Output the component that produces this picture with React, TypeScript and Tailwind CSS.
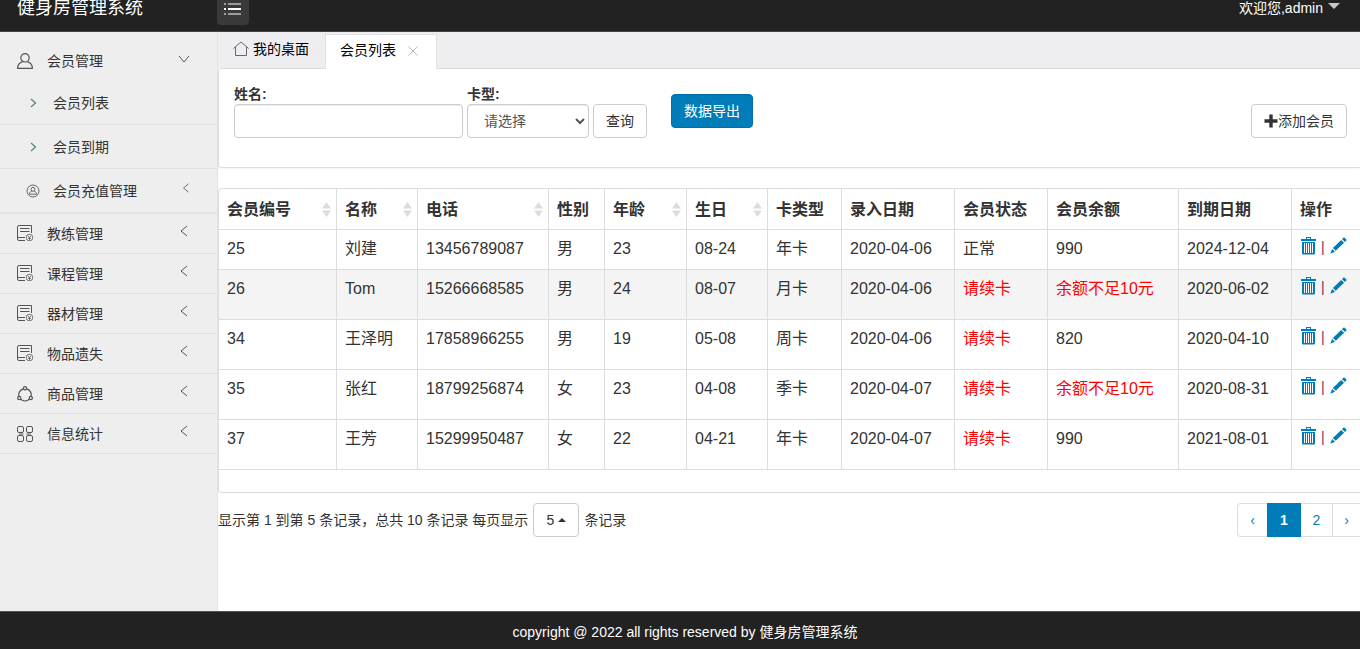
import type { ReactNode } from "react";

type IconProps = { className?: string };

const stroke = {
  fill: "none",
  stroke: "currentColor",
  strokeWidth: 1,
  "aria-hidden": true,
} as const;

const UserIcon = ({ className }: IconProps) => (
  <svg viewBox="0 0 16 16" className={className} {...stroke} strokeWidth="1.200">
    <circle cx="8" cy="4.800" r="4.200" />
    <path d="M5.600 8.600C2.600 9.600.6 12 .6 15.400h14.800c0-3.400-2-5.800-5-6.800" />
  </svg>
);

const UserCircleIcon = ({ className }: IconProps) => (
  <svg viewBox="0 0 14 14" className={className} {...stroke}>
    <circle cx="7" cy="7" r="6" />
    <circle cx="7" cy="5.300" r="2" />
    <path d="M5.800 7C4.300 7.600 3.500 8.800 3.400 10.200h7.200C10.500 8.800 9.700 7.600 8.200 7" />
  </svg>
);

const DocIcon = ({ className }: IconProps) => (
  <svg viewBox="0 0 16 17" className={className} {...stroke}>
    <path d="M8 15.500H2A1.500 1.500 0 0 1 .5 14V2A1.500 1.500 0 0 1 2 .5h12.500V8M.5 12.500H8" />
    <path d="M3 3.500h9.500M3 6.500h9.500" />
    <rect x="9.500" y="9.500" width="6" height="6" rx="2" strokeWidth=".8" />
    <path d="M11 10.800l1.500 1.700 1.500-1.700M12.500 12.500v2.500M11 13.300h3" strokeWidth=".8" />
  </svg>
);

const ShareIcon = ({ className }: IconProps) => (
  <svg viewBox="0 0 16 16" className={className} {...stroke} strokeWidth="1.200">
    <circle cx="8" cy="2.200" r="1.600" />
    <circle cx="2.200" cy="12" r="1.600" />
    <circle cx="13.800" cy="12" r="1.600" />
    <path d="M6.400 2.800A6.200 6.200 0 0 0 1.900 10.300M9.600 2.800a6.200 6.200 0 0 1 4.500 7.500M3.700 13.200a6.500 6.500 0 0 0 8.600 0" />
  </svg>
);

const GridIcon = ({ className }: IconProps) => (
  <svg viewBox="0 0 16 16" className={className} {...stroke}>
    <rect x=".5" y=".5" width="6" height="6" rx="1.500" />
    <rect x="9.500" y=".5" width="6" height="6" rx="1.500" />
    <rect x=".5" y="9.500" width="6" height="6" rx="1.500" />
    <rect x="9.500" y="9.500" width="6" height="6" rx="1.500" />
    <path d="M2 8h4.500M9.500 8H14" strokeWidth="2" opacity=".5" />
  </svg>
);

const HomeIcon = ({ className }: IconProps) => (
  <svg viewBox="0 0 16 16" className={className} {...stroke}>
    <path d="M.4 7.500L8 1l7.600 6.500M2.500 6v8.500h11V6" />
  </svg>
);

const Chevron = ({ dir, className }: IconProps & { dir: "left" | "right" | "down" }) => (
  <svg viewBox="0 0 12 12" className={className} {...stroke}>
    {dir === "left" && <path d="M9 1L3 6l6 5" />}
    {dir === "right" && <path d="M4 2l4.500 4L4 10" strokeWidth="1.200" />}
    {dir === "down" && <path d="M1 3l5 6 5-6" />}
  </svg>
);

const TrashIcon = () => (
  <svg viewBox="0 0 15 18" className="h-[18px] w-[15px]" fill="currentColor" aria-hidden="true">
    <path
      fillRule="evenodd"
      d="M5 0h5v2h5v2H0V2h5zM6 1v1h3V1zM1 5h13v11.500a1 1 0 0 1-1 1H2a1 1 0 0 1-1-1zM3 6v10h1V6zM5 6v10h1V6zM7 6v10h1V6zM9 6v10h1V6zM11 6v10h1V6z"
    />
  </svg>
);

const PencilIcon = () => (
  <svg viewBox="0 0 17 17" className="h-[17px] w-[17px]" fill="currentColor" aria-hidden="true">
    <path d="M13.300.8a1 1 0 0 1 1.400 0l1.500 1.500a1 1 0 0 1 0 1.400l-1.300 1.300-2.900-2.900zM11.200 2.900l2.900 2.900-8.300 8-2.900-2.800zM2.100 11.900l3 2.900L.3 16.700z" />
  </svg>
);

const SortIcon = () => (
  <svg viewBox="0 0 9 15" className="h-[15px] w-[9px] shrink-0 text-[#dcdcdc]" fill="currentColor" aria-hidden="true">
    <path d="M4.500 0L9 6.500H0zM4.500 15L0 8.500h9z" />
  </svg>
);

const subItems = [
  { label: "会员列表", nested: false },
  { label: "会员到期", nested: false },
  { label: "会员充值管理", nested: true },
];

const menu: { label: string; icon: ReactNode }[] = [
  { label: "教练管理", icon: <DocIcon className="h-[17px] w-4" /> },
  { label: "课程管理", icon: <DocIcon className="h-[17px] w-4" /> },
  { label: "器材管理", icon: <DocIcon className="h-[17px] w-4" /> },
  { label: "物品遗失", icon: <DocIcon className="h-[17px] w-4" /> },
  { label: "商品管理", icon: <ShareIcon className="size-4" /> },
  { label: "信息统计", icon: <GridIcon className="size-4" /> },
];

function Sidebar() {
  return (
    <nav className="w-[218px] shrink-0 border-r border-[#e2e2e2] bg-[#eeeeee] pt-[9px] text-[#333]">
      <a href="#members" className="flex h-10 items-center pr-[27px] pl-[17px]">
        <UserIcon className="size-4 text-[#555]" />
        <span className="ml-[14px] flex-1">会员管理</span>
        <Chevron dir="down" className="mb-1 size-3 text-[#555]" />
      </a>
      <ul className="border-b border-[#e2e2e2]">
        {subItems.map((s) => (
          <li key={s.label} className="border-b border-[#e2e2e2]">
            <a href={`#${s.label}`} className="flex h-[43px] items-center pr-[26px] pl-[26px]">
              {s.nested ? (
                <UserCircleIcon className="size-[14px] text-[#666]" />
              ) : (
                <Chevron dir="right" className="mx-px size-3 text-[#5d7a85]" />
              )}
              <span className="ml-[13px] flex-1">{s.label}</span>
              {s.nested && <Chevron dir="left" className="mb-[6px] size-[10px] text-[#555]" />}
            </a>
          </li>
        ))}
      </ul>
      <ul>
        {menu.map((m) => (
          <li key={m.label} className="border-b border-[#e2e2e2]">
            <a href={`#${m.label}`} className="flex h-[39px] items-center pr-[27px] pl-[17px]">
              <span className="text-[#555]">{m.icon}</span>
              <span className="ml-[14px] flex-1">{m.label}</span>
              <Chevron dir="left" className="mb-[5px] size-3 text-[#555]" />
            </a>
          </li>
        ))}
      </ul>
    </nav>
  );
}

function Tabs() {
  return (
    <div className="flex h-9 items-end bg-[#eeeef0] text-black" role="tablist">
      <button type="button" role="tab" aria-selected="false" className="flex h-[35px] w-[107px] items-center gap-1 pb-[3px] pl-[15px]">
        <HomeIcon className="size-4 text-[#667]" />
        我的桌面
      </button>
      <div className="relative z-10 -mb-px flex h-[35px] w-[112px] items-center border-x border-t border-[#e2e2e2] bg-white pb-1 pl-[14px]">
        <button type="button" role="tab" aria-selected="true">
          会员列表
        </button>
        <button type="button" aria-label="关闭" className="ml-3 pt-[2px] text-[#bbb]">
          <svg viewBox="0 0 10 10" className="size-[10px]" {...stroke}>
            <path d="M.5.5l9 9M9.500.5l-9 9" />
          </svg>
        </button>
      </div>
    </div>
  );
}

function SearchPanel() {
  return (
    <section className="flex items-start rounded-l border border-r-0 border-[#ddd] bg-white pt-[15px] pr-[13px] pb-[29px] pl-[15px] shadow-xs">
      <form className="flex items-end gap-1" onSubmit={(e) => e.preventDefault()}>
        <div>
          <label htmlFor="name" className="block leading-5 font-bold">
            姓名:
          </label>
          <input
            id="name"
            type="text"
            className="block h-[34px] w-[229px] rounded border border-[#ccc] px-3 text-[#555] shadow-[inset_0_1px_1px_rgba(0,0,0,0.075)]"
          />
        </div>
        <div>
          <label htmlFor="card" className="block leading-5 font-bold">
            卡型:
          </label>
          <select
            id="card"
            className="block h-[34px] w-[122px] rounded border border-[#ccc] bg-white px-3 text-[#555] shadow-[inset_0_1px_1px_rgba(0,0,0,0.075)]"
          >
            <option>请选择</option>
            <option>年卡</option>
            <option>季卡</option>
            <option>月卡</option>
            <option>周卡</option>
          </select>
        </div>
        <button type="submit" className="h-[34px] w-[54px] rounded border border-[#ccc] bg-white">
          查询
        </button>
      </form>
      <button type="button" className="mt-[10px] ml-6 h-[34px] w-[82px] rounded border border-[#006fa8] bg-[#007db9] text-white">
        数据导出
      </button>
      <button
        type="button"
        className="mt-5 ml-auto flex h-[34px] w-24 items-center justify-center rounded border border-[#ccc] bg-white"
      >
        <svg viewBox="0 0 14 14" className="size-[14px]" fill="currentColor" aria-hidden="true">
          <path d="M5.300.5h3.400v4.800h4.800v3.400H8.700v4.800H5.300V8.700H.5V5.300h4.800z" />
        </svg>
        添加会员
      </button>
    </section>
  );
}

const columns = [
  { label: "会员编号", sort: true, width: "w-[118px]" },
  { label: "名称", sort: true, width: "w-[81px]" },
  { label: "电话", sort: true, width: "w-[131px]" },
  { label: "性别", sort: false, width: "w-[56px]" },
  { label: "年龄", sort: true, width: "w-[82px]" },
  { label: "生日", sort: true, width: "w-[81px]" },
  { label: "卡类型", sort: false, width: "w-[74px]" },
  { label: "录入日期", sort: false, width: "w-[113px]" },
  { label: "会员状态", sort: false, width: "w-[93px]" },
  { label: "会员余额", sort: false, width: "w-[131px]" },
  { label: "到期日期", sort: false, width: "w-[113px]" },
];

const rows = [
  ["25", "刘建", "13456789087", "男", "23", "08-24", "年卡", "2020-04-06", "正常", "990", "2024-12-04"],
  ["26", "Tom", "15266668585", "男", "24", "08-07", "月卡", "2020-04-06", "请续卡", "余额不足10元", "2020-06-02"],
  ["34", "王泽明", "17858966255", "男", "19", "05-08", "周卡", "2020-04-06", "请续卡", "820", "2020-04-10"],
  ["35", "张红", "18799256874", "女", "23", "04-08", "季卡", "2020-04-07", "请续卡", "余额不足10元", "2020-08-31"],
  ["37", "王芳", "15299950487", "女", "22", "04-21", "年卡", "2020-04-07", "请续卡", "990", "2021-08-01"],
];

const warnings = ["请续卡", "余额不足10元"];

function MemberTable() {
  return (
    <section className="mt-5 rounded-l border border-r-0 border-[#ddd] pb-[22px]">
      <table className="w-full table-fixed border-separate border-spacing-0 text-left text-base leading-[23px]">
        <thead>
          <tr className="h-[41px]">
            {columns.map((c) => (
              <th key={c.label} className={`${c.width} border-r border-b border-[#ddd] pr-[5px] pl-2 font-bold`}>
                <div className="flex items-center justify-between whitespace-nowrap">
                  {c.label}
                  {c.sort && <SortIcon />}
                </div>
              </th>
            ))}
            <th className="border-b border-[#ddd] pl-2 font-bold">操作</th>
          </tr>
        </thead>
        <tbody>
          {rows.map((r, i) => (
            <tr key={r[0]} className={`${i === 0 ? "h-10" : "h-[50px]"} ${i === 1 ? "bg-[#f4f4f4]" : ""}`}>
              {r.map((v, j) => (
                <td
                  key={columns[j].label}
                  className={`border-r border-b border-[#ddd] pt-[7px] pl-2 align-top whitespace-nowrap ${warnings.includes(v) ? "text-[#f00]" : ""}`}
                >
                  {v}
                </td>
              ))}
              <td className="border-b border-[#ddd] pt-[7px] pl-[9px] align-top">
                <div className="flex items-start gap-[5px] text-[#007db9]">
                  <button type="button" aria-label="删除">
                    <TrashIcon />
                  </button>
                  <span className="text-sm text-[#7a2a5a]">|</span>
                  <button type="button" aria-label="编辑">
                    <PencilIcon />
                  </button>
                </div>
              </td>
            </tr>
          ))}
        </tbody>
      </table>
    </section>
  );
}

function Pager() {
  return (
    <div className="mt-[10px] flex items-center justify-between">
      <div className="flex items-center gap-[5px]">
        <span>显示第 1 到第 5 条记录，总共 10 条记录 每页显示</span>
        <button type="button" className="flex h-[34px] w-[46px] items-center justify-center gap-1 rounded border border-[#ccc] bg-white">
          5
          <svg viewBox="0 0 8 4" className="h-1 w-2" fill="currentColor" aria-hidden="true">
            <path d="M4 0l4 4H0z" />
          </svg>
        </button>
        <span>条记录</span>
      </div>
      <div className="flex h-[34px] text-[#007db9]">
        <button type="button" className="w-[30px] rounded-l border border-r-0 border-[#ddd]">
          ‹
        </button>
        <button type="button" className="w-[34px] bg-[#007db9] font-bold text-white">
          1
        </button>
        <button type="button" className="w-8 border border-l-0 border-[#ddd]">
          2
        </button>
        <button type="button" className="w-[27px] border-y border-[#ddd]">
          ›
        </button>
      </div>
    </div>
  );
}

export default function App() {
  return (
    <div className="flex min-h-screen flex-col bg-white font-['Liberation_Sans','Noto_Sans_CJK_SC',sans-serif] text-sm leading-5 text-[#333]">
      <header className="flex h-8 items-start border-b border-[#444] bg-[#222] text-white">
        <h1 className="w-[217px] pl-[17px] text-lg leading-4">健身房管理系统</h1>
        <button type="button" aria-label="菜单" className="flex h-[25px] w-8 items-start justify-center rounded-b bg-[#393939] pt-[3px]">
          <svg viewBox="0 0 18 12" className="h-3 w-[18px]" fill="currentColor" aria-hidden="true">
            <path d="M0 .5h2v1H0zM4 .5h13v1H4zM0 5h2v2H0zM4 5h13v2H4zM0 10.500h2v1H0zM4 10.500h13v1H4z" />
          </svg>
        </button>
        <button type="button" className="mr-5 ml-auto flex items-center gap-[5px] leading-4">
          欢迎您,admin
          <svg viewBox="0 0 12 6" className="mb-1 h-[6px] w-3 text-[#c8c8c8]" fill="currentColor" aria-hidden="true">
            <path d="M0 0h12L6 6z" />
          </svg>
        </button>
      </header>
      <div className="flex flex-1">
        <Sidebar />
        <main className="min-w-0 flex-1">
          <Tabs />
          <SearchPanel />
          <MemberTable />
          <Pager />
        </main>
      </div>
      <footer className="border-t border-[#555] bg-[#222] pt-[10px] pb-[7px] pl-[10px] text-center text-white">
        copyright @ 2022 all rights reserved by 健身房管理系统
      </footer>
    </div>
  );
}
